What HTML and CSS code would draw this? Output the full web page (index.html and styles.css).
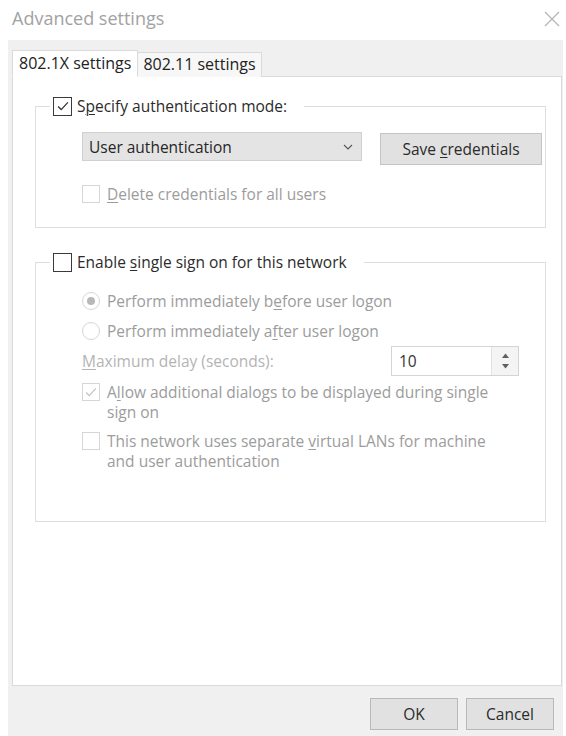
FILE: index.html
```html
<!DOCTYPE html>
<html lang="en">
<head>
<meta charset="utf-8">
<title>Advanced settings</title>
<link rel="stylesheet" href="styles.css">
</head>
<body>
<div class="window">
  <header class="titlebar">
    <span class="title">Advanced settings</span>
    <span class="close" aria-label="Close">
      <svg width="16" height="16" viewBox="0 0 16 16"><path d="M1 1 L15 15 M15 1 L1 15" stroke="#b4b4b4" stroke-width="1.2" fill="none"/></svg>
    </span>
  </header>

  <div class="client">
    <div class="tabs">
      <div class="tab tab-active">802.1X settings</div>
      <div class="tab">802.11 settings</div>
    </div>

    <div class="panel">
      <fieldset class="group group-auth">
        <legend class="legend">
          <span class="box box-dark">
            <svg viewBox="0 0 18 18" width="16" height="16"><path d="M3.5 9.5 L7 13 L14.5 5" stroke="#333" stroke-width="1.4" fill="none"/></svg>
          </span>
          <span class="label-dark">S<u>p</u>ecify authentication mode:</span>
        </legend>

        <div class="auth-row">
          <div class="select">
            <span>User authentication</span>
            <svg width="10" height="6" viewBox="0 0 10 6"><path d="M1 1 L5 5 L9 1" stroke="#555" stroke-width="1.1" fill="none"/></svg>
          </div>
          <button class="btn btn-save" type="button">Save <u>c</u>redentials</button>
        </div>

        <div class="option option-delete">
          <span class="box box-light"></span>
          <span class="label-dim"><u>D</u>elete credentials for all users</span>
        </div>
      </fieldset>

      <fieldset class="group group-sso">
        <legend class="legend">
          <span class="box box-dark"></span>
          <span class="label-dark">Enable <u>s</u>ingle sign on for this network</span>
        </legend>

        <div class="option option-radio-first">
          <span class="radio radio-on"></span>
          <span class="label-dim">Perform immediately b<u>e</u>fore user logon</span>
        </div>
        <div class="option option-radio">
          <span class="radio"></span>
          <span class="label-dim">Perform immediately a<u>f</u>ter user logon</span>
        </div>

        <div class="delay-row">
          <span class="label-faint"><u>M</u>aximum delay (seconds):</span>
          <div class="spin">
            <span class="spin-value">10</span>
            <span class="spin-buttons">
              <svg width="7" height="5" viewBox="0 0 7 5"><path d="M0 5 L3.5 0.5 L7 5 Z" fill="#606060"/></svg>
              <svg width="7" height="5" viewBox="0 0 7 5"><path d="M0 0 L3.5 4.5 L7 0 Z" fill="#606060"/></svg>
            </span>
          </div>
        </div>

        <div class="option option-multi">
          <span class="box box-light">
            <svg viewBox="0 0 18 18" width="16" height="16"><path d="M3.5 9.5 L7 13 L14.5 5" stroke="#c4c4c4" stroke-width="1.4" fill="none"/></svg>
          </span>
          <span class="label-dim">A<u>l</u>low additional dialogs to be displayed during single<br>sign on</span>
        </div>

        <div class="option option-multi option-vlan">
          <span class="box box-light"></span>
          <span class="label-dim">This network uses separate <u>v</u>irtual LANs for machine<br>and user authentication</span>
        </div>
      </fieldset>
    </div>

    <div class="actions">
      <button class="btn btn-action" type="button">OK</button>
      <button class="btn btn-action" type="button">Cancel</button>
    </div>
  </div>
</div>
</body>
</html>
```

FILE: styles.css
```css
* {
  box-sizing: border-box;
}

html,
body {
  margin: 0;
  padding: 0;
  background: #ffffff;
}

body {
  font-family: "Open Sans", "Noto Sans", sans-serif;
  font-size: 15.5px;
  color: #2b2b2b;
}

u {
  text-decoration-thickness: 1px;
  text-underline-offset: 2px;
}

/* Dialog frame */
.window {
  width: 566px;
  height: 736px;
  display: flex;
  flex-direction: column;
  background: #ffffff;
}

.titlebar {
  height: 40px;
  flex: none;
  display: flex;
  align-items: center;
  justify-content: space-between;
  padding: 0 5px 4px 12px;
}

.title {
  font-size: 18px;
  color: #a2a2a2;
}

.close {
  display: flex;
  margin-right: 1px;
  margin-top: 2px;
}

.client {
  flex: 1;
  display: flex;
  flex-direction: column;
  background: #f0f0f0;
  margin-left: 8px;
  margin-right: 3px;
  padding: 10px 1px 0 4px;
}

/* Tab strip */
.tabs {
  display: flex;
  align-items: flex-end;
  height: 27px;
  margin-bottom: -1px;
  position: relative;
  z-index: 1;
  font-size: 16px;
}

.tab {
  height: 25px;
  line-height: 23px;
  padding: 0 5px;
  border: 1px solid #dadada;
  border-bottom: none;
  background: #f7f7f7;
  margin-left: -1px;
  color: #222;
}

.tab-active {
  height: 27px;
  line-height: 25px;
  margin-left: 0;
  padding: 0 6px;
  background: #ffffff;
  position: relative;
  z-index: 2;
  border-bottom: 1px solid #ffffff;
}

.panel {
  flex: 1;
  background: #ffffff;
  border: 1px solid #dadada;
  padding: 19px 15px 0 22px;
  display: flex;
  flex-direction: column;
}

/* Group boxes */
.group {
  margin: 0;
  padding: 0 3px 0 46px;
  border: 1px solid #dedede;
  min-width: 0;
}

.group-auth {
  padding-bottom: 23px;
}

.group-sso {
  margin-top: 24px;
  padding-bottom: 50px;
}

.legend {
  display: flex;
  align-items: center;
  gap: 5px;
  height: 20px;
  padding: 0 17px 0 3px;
  margin-left: -32px;
}

.label-dark {
  color: #2b2b2b;
}

.label-dim {
  color: #9c9c9c;
}

.label-faint {
  color: #b4b4b4;
}

/* Check boxes and radio buttons */
.box {
  width: 18px;
  height: 18px;
  flex: none;
  display: flex;
  align-items: center;
  justify-content: center;
  background: #ffffff;
}

.box-dark {
  width: 19px;
  height: 19px;
  border: 1px solid #3a3a3a;
}

.box-light {
  border: 1px solid #d6d6d6;
}

.radio {
  width: 18px;
  height: 18px;
  flex: none;
  border-radius: 50%;
  border: 1px solid #d6d6d6;
  background: #ffffff;
  position: relative;
}

.radio-on::after {
  content: "";
  position: absolute;
  left: 4px;
  top: 4px;
  width: 8px;
  height: 8px;
  border-radius: 50%;
  background: #b8b8b8;
}

.option {
  display: flex;
  align-items: center;
  gap: 7px;
  height: 20px;
}

.option-delete {
  margin-top: 19px;
}

.option-radio-first {
  margin-top: 19px;
}

.option-radio {
  margin-top: 10px;
}

.option-multi {
  height: auto;
  align-items: flex-start;
  line-height: 20px;
  margin-top: 6px;
}

.option-multi .box {
  margin-top: 1px;
}

.option-vlan {
  margin-top: 9px;
}

/* Authentication mode row */
.auth-row {
  display: flex;
  align-items: flex-start;
  margin-top: 16px;
  gap: 18px;
}

.select {
  width: 280px;
  height: 29px;
  display: flex;
  align-items: center;
  justify-content: space-between;
  padding: 0 8px 0 6px;
  background: #e4e4e4;
  border: 1px solid #d0d0d0;
  color: #262626;
}

.btn {
  font-family: inherit;
  font-size: 15.5px;
  color: #2b2b2b;
  background: #e1e1e1;
  border: 1px solid #c4c4c4;
  padding: 0;
  cursor: default;
}

.btn-save {
  flex: 1;
  height: 32px;
  margin-top: 1px;
}

/* Delay spinner */
.delay-row {
  display: flex;
  align-items: center;
  justify-content: space-between;
  margin-top: 5px;
  padding-right: 23px;
}

.spin {
  width: 128px;
  height: 30px;
  display: flex;
  border: 1px solid #d4d4d4;
  background: #ffffff;
}

.spin-value {
  flex: 1;
  line-height: 28px;
  padding-left: 7px;
  color: #333;
}

.spin-buttons {
  width: 27px;
  display: flex;
  flex-direction: column;
  align-items: center;
  justify-content: center;
  gap: 6px;
  background: #f4f4f4;
  border-left: 1px solid #e2e2e2;
}

/* Dialog buttons */
.actions {
  display: flex;
  justify-content: flex-end;
  gap: 8px;
  padding: 12px 8px 6px 0;
}

.btn-action {
  width: 88px;
  height: 32px;
  border-color: #b9b9b9;
}
```
